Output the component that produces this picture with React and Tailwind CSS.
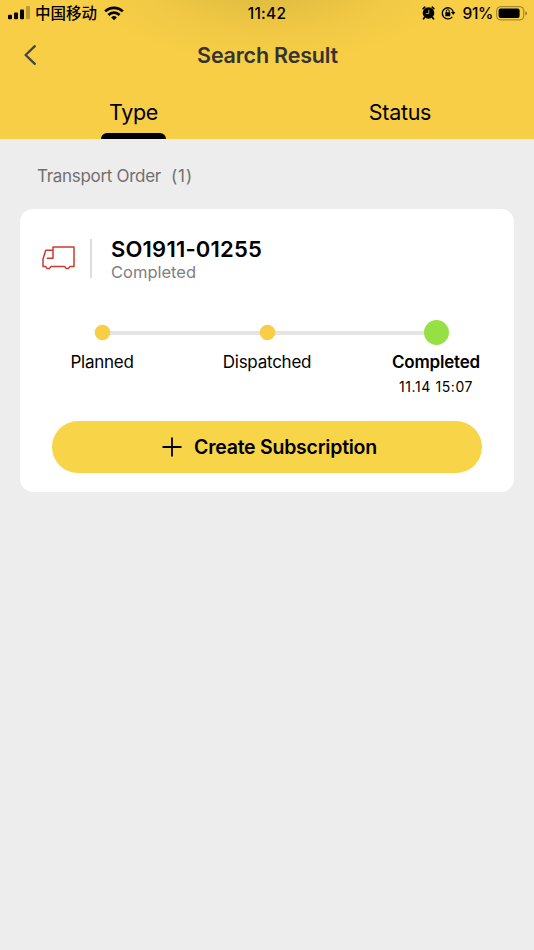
import React from 'react';

const steps = [
  { label: 'Planned' },
  { label: 'Dispatched' },
  { label: 'Completed', time: '11.14 15:07', current: true }
];

const SignalIcon = () => (
  <svg className="w-[23px] h-[14px]" viewBox="0 0 23 14">
    <rect x="0" y="8.8" width="4" height="4.4" rx="1" />
    <rect x="6" y="6.6" width="4" height="6.6" rx="1" />
    <rect x="12" y="3.4" width="4" height="9.8" rx="1" />
    <rect x="18" y="0" width="4" height="13.2" rx="1" opacity="0.25" />
  </svg>
);

const WifiIcon = () => (
  <svg className="w-[20px] h-[15px]" viewBox="0 0 20 15" fill="none" stroke="black" strokeWidth="2.7">
    <path d="M1.2 5.4a12.6 12.6 0 0 1 17.6 0" />
    <path d="M4.4 9a8 8 0 0 1 11.2 0" />
    <path d="M10 14.2 7.2 11.4a4.1 4.1 0 0 1 5.6 0z" fill="black" stroke="none" />
  </svg>
);

const AlarmIcon = () => (
  <svg className="w-[13px] h-[14px]" viewBox="0 0 13 14">
    <circle cx="6.5" cy="7" r="5.8" />
    <path d="M1.2 2.6 2.8 1.2M10.2 1.2l1.6 1.4M2.6 11.4l-1.1 1.4M10.4 11.4l1.1 1.4" fill="none" stroke="black" strokeWidth="1.7" strokeLinecap="round" />
    <path d="M6.8 3.8v3.8H3.8" fill="none" stroke="#f8ce46" strokeWidth="0.8" />
  </svg>
);

const RotationLockIcon = () => (
  <svg className="w-[15px] h-[14px]" viewBox="0 0 15 14">
    <path d="M11.3 10.8A5.6 5.6 0 1 1 12.3 6" fill="none" stroke="black" strokeWidth="1.3" />
    <path d="M9.9 6h4.5l-2.2 3z" />
    <rect x="4.3" y="6.2" width="5" height="4" rx="0.5" />
    <path d="M5.3 6.6V5.1a1.5 1.5 0 0 1 3 0v1.5" fill="none" stroke="black" strokeWidth="1" />
  </svg>
);

const BatteryIcon = () => (
  <svg className="w-[32px] h-[15px]" viewBox="0 0 32 15">
    <rect x="0.7" y="0.7" width="27" height="13.2" rx="3.6" fill="none" stroke="black" strokeOpacity="0.4" strokeWidth="1" />
    <rect x="2.6" y="2.5" width="21" height="9.6" rx="2" />
    <path d="M29.4 5v4.6a2.5 2.5 0 0 0 0-4.6z" opacity="0.45" />
  </svg>
);

const TruckIcon = () => (
  <svg className="w-[34px] h-[24px] mb-[2px]" viewBox="0 0 34 24" fill="none" stroke="#cc3a2e" strokeWidth="1.5" strokeLinecap="round" strokeLinejoin="round">
    <path d="M11 4.2H3.8L2.4 8.6 1 13v7.4h2.6l1.6 2.2h2.2L9 20.4h13.6l1.6 2.2h2.2l1.6-2.2H32V1H11v11.3H5.4" />
  </svg>
);

const StatusBar = () => (
  <div className="flex h-[26px] items-center justify-between pl-2 pr-[6px]">
    <div className="flex w-[200px] items-center">
      <SignalIcon />
      <span className="ml-[4px] mr-[7px] font-['Noto_Sans_CJK_SC',sans-serif] mb-[2px] text-[15.5px] leading-[24px] font-medium">中国移动</span>
      <WifiIcon />
    </div>
    <span className="mt-px text-[15.5px] leading-[26px] font-medium tracking-[0.2px]">11:42</span>
    <div className="flex w-[202px] items-center justify-end">
      <AlarmIcon />
      <span className="ml-[6px] mr-[7px] flex"><RotationLockIcon /></span>
      <span className="mt-px mr-[3px] text-[15.5px] leading-[26px] font-medium tracking-[-0.4px]">91%</span>
      <BatteryIcon />
    </div>
  </div>
);

const Header = () => (
  <header className="h-[139px] bg-[#f8ce46] bg-[radial-gradient(ellipse_190px_84px_at_50%_-20px,#dfba40_0%,#e2be41_25%,#f2c945_65%,#f8ce46_100%)]">
    <StatusBar />
    <div className="grid h-[58px] grid-cols-[80px_1fr_80px] items-center">
      <button className="pl-6">
        <svg className="h-5 w-3" viewBox="0 0 12 20" fill="none" stroke="#444444" strokeWidth="2.3" strokeLinecap="round" strokeLinejoin="round">
          <path d="M10.8 1.2 1.6 10l9.2 8.8" />
        </svg>
      </button>
      <h1 className="pl-px text-center text-[21.5px] leading-[58px] font-semibold tracking-[-0.2px] text-[#333333]">Search Result</h1>
    </div>
    <nav className="grid h-[55px] grid-cols-2 text-[21.5px] tracking-[-0.3px]">
      <button className="flex flex-col items-center">
        <span className="h-[49px] leading-[56px]">Type</span>
        <span className="h-[6px] w-[65px] rounded-t-[6px] bg-black" />
      </button>
      <button className="flex flex-col items-center pr-px">
        <span className="leading-[56px]">Status</span>
      </button>
    </nav>
  </header>
);

const Step = ({ step }) => (
  <div className="flex w-[120px] flex-col items-center">
    <div className="flex h-[25px] items-center">
      {step.current ? (
        <span className="size-[25px] rounded-full bg-[#97e044]" />
      ) : (
        <svg className="size-[17px]" viewBox="0 0 17 17">
          <circle cx="8.5" cy="8.5" r="7.8" fill="#f8ce46" />
        </svg>
      )}
    </div>
    <span className={step.current ? 'mt-[5px] text-[17px] leading-6 font-semibold tracking-[-0.2px]' : 'mt-[5px] text-[17px] leading-6 tracking-[-0.25px]'}>
      {step.label}
    </span>
    {step.time && <span className="mt-[3px] text-[14px] leading-5 tracking-[0.6px]">{step.time}</span>}
  </div>
);

const OrderCard = () => (
  <section className="mx-5 h-[283px] w-[494px] rounded-[13px] bg-white pt-[28px]">
    <div className="flex h-[44px] items-center pl-[22px]">
      <TruckIcon />
      <div className="ml-[14px] mr-[19px] mb-[2px] h-[39px] w-[2px] bg-[#dddddd]" />
      <div className="mt-[2px]">
        <h2 className="text-[22px] leading-6 font-semibold tracking-[0.2px]">SO1911-01255</h2>
        <p className="text-[16.5px] leading-[22px] text-[#808080]">Completed</p>
      </div>
    </div>

    {/* Progress */}
    <div className="mt-[39px] grid grid-cols-1">
      <div className="col-start-1 row-start-1 mt-[11px] ml-[82px] mr-[78px] h-1 bg-[#e4e4e4]" />
      <div className="z-10 col-start-1 row-start-1 flex pl-[22px]">
        <Step step={steps[0]} />
        <div className="ml-[45px] mr-[49px]">
          <Step step={steps[1]} />
        </div>
        <Step step={steps[2]} />
      </div>
    </div>

    <button className="mx-8 mt-[24px] flex h-[52px] w-[430px] items-center justify-center rounded-full bg-[#f8d548] pl-[5px]">
      <svg className="h-5 w-5" viewBox="0 0 20 20" fill="none" stroke="black" strokeWidth="1.8" strokeLinecap="round">
        <path d="M10 1.2v17.6M1.2 10h17.6" />
      </svg>
      <span className="mt-px ml-3 text-[19.5px] font-semibold tracking-[-0.25px]">Create Subscription</span>
    </button>
  </section>
);

const App = () => (
  <div className="min-h-screen w-[534px] bg-[#ededed] font-['Inter',sans-serif] text-black">
    <Header />
    <p className="flex h-[70px] gap-[10px] pl-[37px] text-[17px] leading-[74px] text-[#707070]">
      <span className="tracking-[-0.3px]">Transport Order</span>
      <span className="tracking-[1px]">(1)</span>
    </p>
    <OrderCard />
  </div>
);

export default App;
